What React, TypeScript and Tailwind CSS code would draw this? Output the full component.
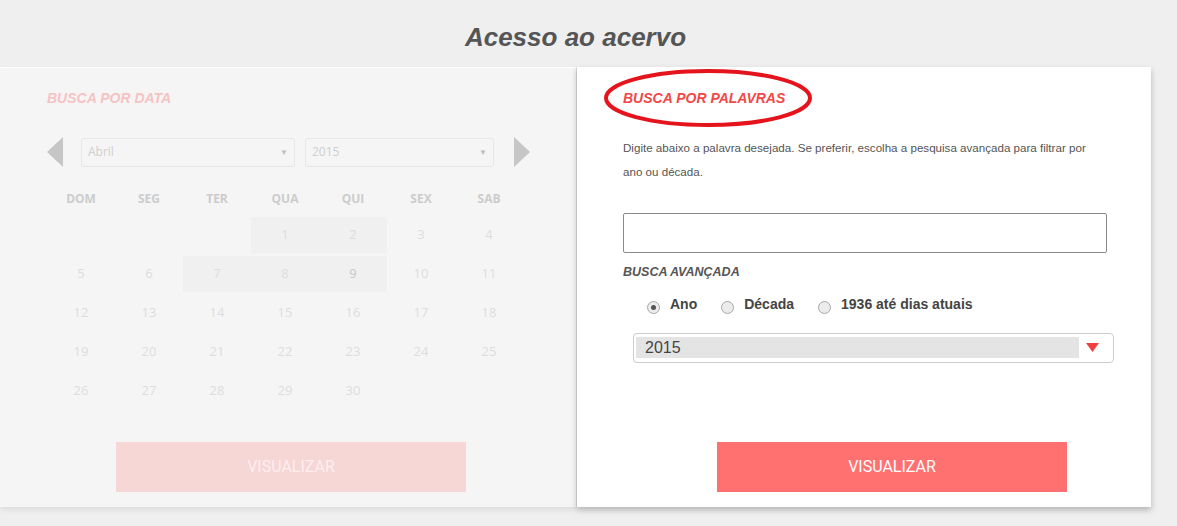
import React from 'react';

const days = ['DOM', 'SEG', 'TER', 'QUA', 'QUI', 'SEX', 'SAB'];

// April 2015 starts on Wednesday
const cells: (number | null)[] = [null, null, null, ...Array.from({ length: 30 }, (_, i) => i + 1)];
const highlighted = [1, 2, 7, 8, 9];

function Triangle({ dir }: { dir: 'left' | 'right' }) {
  return (
    <svg width="16" height="30" viewBox="0 0 16 30" className="shrink-0">
      {dir === 'left' ? (
        <polygon points="16,0 16,30 0,15" fill="#c6c6c6" />
      ) : (
        <polygon points="0,0 0,30 16,15" fill="#c6c6c6" />
      )}
    </svg>
  );
}

function FadedSelect({ label, width }: { label: string; width: string }) {
  return (
    <div
      className={`${width} h-[29px] border border-[#e6e6e6] rounded-[3px] flex items-center justify-between px-[6px] text-[12px] text-[#cfcfcf]`}
      style={{ fontFamily: '"Open Sans", sans-serif' }}
    >
      <span>{label}</span>
      <span className="text-[8px] text-[#bdbdbd]">▼</span>
    </div>
  );
}

export default function App() {
  return (
    <div
      className="min-h-screen bg-[#efefef] overflow-hidden"
      style={{ fontFamily: '"Liberation Sans", Arial, sans-serif' }}
    >
      {/* title */}
      <h1 className="h-[67px] flex items-center justify-center pt-[8px] pr-[26px] text-[26px] font-bold italic text-[#555555]">
        Acesso ao acervo
      </h1>

      <div className="flex">
        {/* ========== LEFT PANEL (faded) ========== */}
        <div className="w-[577px] h-[440px] bg-[#f5f5f5] border-t border-white border-r border-r-[#d9d9d9] shadow-[0_3px_6px_rgba(0,0,0,0.08)] pl-[47px] pr-[53px]">
          <h2 className="mt-[20px] text-[14px] font-bold italic text-[#f5c3c3]">BUSCA POR DATA</h2>

          <div className="mt-[28px] flex items-center">
            <Triangle dir="left" />
            <div className="ml-[18px] mr-[20px] flex gap-[10px]">
              <FadedSelect label="Abril" width="w-[214px]" />
              <FadedSelect label="2015" width="w-[189px]" />
            </div>
            <Triangle dir="right" />
          </div>

          <div style={{ fontFamily: '"Open Sans", sans-serif' }}>
            <div className="mt-[23px] grid grid-cols-[repeat(7,68px)] text-[12px] font-bold text-[#cccccc]">
              {days.map((d) => (
                <div key={d} className="text-center">
                  {d}
                </div>
              ))}
            </div>
            <div className="mt-[9px] grid grid-cols-[repeat(7,68px)] gap-y-[3px]">
              {cells.map((n, i) => (
                <div
                  key={i}
                  className={`h-[36px] flex items-center justify-center text-[13px] ${
                    n && highlighted.includes(n) ? 'bg-[#f0f0f0]' : ''
                  } ${n === 9 ? 'text-[#c8c8c8]' : 'text-[#dddddd]'}`}
                >
                  {n ?? ''}
                </div>
              ))}
            </div>
          </div>

          <div
            className="mt-[33px] ml-[69px] w-[350px] h-[50px] bg-[#f7d6d6] flex items-center justify-center text-[16px] text-[#fcefef]"
            style={{ fontFamily: 'Roboto, sans-serif' }}
          >
            VISUALIZAR
          </div>
        </div>

        {/* ========== RIGHT PANEL ========== */}
        <div className="relative w-[574px] h-[440px] bg-white shadow-[0_3px_6px_rgba(0,0,0,0.25)] pl-[46px] pr-[44px]">
          {/* red annotation ellipse */}
          <svg className="absolute left-[26px] top-[1px]" width="210" height="62" viewBox="0 0 210 62">
            <ellipse cx="105" cy="30" rx="102" ry="27" fill="none" stroke="#e5141c" strokeWidth="4" />
          </svg>

          <h2 className="mt-[21px] text-[14px] font-bold italic text-[#f24848]">BUSCA POR PALAVRAS</h2>

          <p className="mt-[27px] text-[11.6px] leading-[24px] text-[#555555]">
            Digite abaixo a palavra desejada. Se preferir, escolha a pesquisa avançada para filtrar por ano ou década.
          </p>

          <input
            type="text"
            className="mt-[29px] block w-[484px] h-[40px] border border-[#8a8a8a] rounded-[2px] bg-white outline-none"
          />

          <h3 className="mt-[10px] text-[12.5px] font-bold italic text-[#555555]">BUSCA AVANÇADA</h3>

          <div className="mt-[12px] ml-[24px] flex items-start text-[14px] font-bold text-[#444444]">
            <span className="mt-[7px] w-[13px] h-[13px] rounded-full border border-[#a8a8a8] bg-[#ececec] flex items-center justify-center">
              <span className="w-[5px] h-[5px] rounded-full bg-[#555555]" />
            </span>
            <span className="ml-[10px]">Ano</span>
            <span className="ml-[24px] mt-[7px] w-[13px] h-[13px] rounded-full border border-[#a8a8a8] bg-[#ececec]" />
            <span className="ml-[10px]">Década</span>
            <span className="ml-[24px] mt-[7px] w-[13px] h-[13px] rounded-full border border-[#a8a8a8] bg-[#ececec]" />
            <span className="ml-[10px]">1936 até dias atuais</span>
          </div>

          <div className="mt-[18px] ml-[10px] w-[481px] h-[30px] border border-[#cccccc] rounded-[4px] flex items-center pl-[2px] pr-[14px]">
            <div className="w-[443px] h-[21px] bg-[#e4e4e4] flex items-center pl-[9px] text-[16px] text-[#444444]">
              2015
            </div>
            <svg className="ml-auto" width="13" height="9" viewBox="0 0 13 9">
              <polygon points="0,0 13,0 6.5,9" fill="#f04040" />
            </svg>
          </div>

          <button
            className="mt-[79px] ml-[94px] w-[350px] h-[50px] bg-[#ff7070] flex items-center justify-center text-[16px] text-white"
            style={{ fontFamily: 'Roboto, sans-serif' }}
          >
            VISUALIZAR
          </button>
        </div>
      </div>
    </div>
  );
}
